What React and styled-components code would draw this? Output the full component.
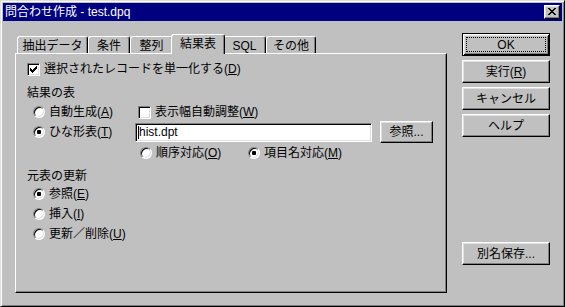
import React from "react";
import styled, { createGlobalStyle, css } from "styled-components";

const face = "#c0c0c0";
const font = `"Liberation Sans", "Noto Sans CJK JP", sans-serif`;

const tabs = [
  { label: "抽出データ", w: 71 },
  { label: "条件", w: 42 },
  { label: "整列", w: 43 },
  { label: "結果表", w: 50, on: true },
  { label: "SQL", w: 43 },
  { label: "その他", w: 50 },
];

// win95 check glyph, 7x7 pixels
const checkPixels = [
  "......#",
  ".....##",
  "#...###",
  "##.###.",
  "#####..",
  ".###...",
  "..#....",
];

const closePixels = [
  "##....##",
  ".##..##.",
  "..####..",
  "...##...",
  "..####..",
  ".##..##.",
  "##....##",
];

function PixelGlyph({ rows }) {
  const rects = [];
  rows.forEach((row, y) => {
    row.split("").forEach((c, x) => {
      if (c === "#") rects.push(<rect key={x + "-" + y} x={x} y={y} width="1" height="1" />);
    });
  });
  return (
    <svg width={rows[0].length} height={rows.length} shapeRendering="crispEdges" fill="#000">
      {rects}
    </svg>
  );
}

function App() {
  return (
    <>
      <GlobalStyle />
      <Window>
        <TitleBar>
          <TitleText>問合わせ作成 - test.dpq</TitleText>
          <CloseButton>
            <PixelGlyph rows={closePixels} />
          </CloseButton>
        </TitleBar>
        <Body>
          <LeftCol>
            <TabRow>
              {tabs.map((t) => (
                <Tab key={t.label} $w={t.w} $on={t.on}>
                  {t.label}
                </Tab>
              ))}
            </TabRow>
            <Panel>
              <Choice>
                <CheckBox>
                  <PixelGlyph rows={checkPixels} />
                </CheckBox>
                <Label>
                  選択されたレコードを単一化する(<u>D</u>)
                </Label>
              </Choice>

              <GroupTitle>結果の表</GroupTitle>
              <ResultGrid>
                <Choice $indent={6}>
                  <Radio />
                  <Label>
                    自動生成(<u>A</u>)
                  </Label>
                </Choice>
                <Choice $indent={3}>
                  <CheckBox />
                  <Label>
                    表示幅自動調整(<u>W</u>)
                  </Label>
                </Choice>
                <Choice $indent={6}>
                  <Radio $on />
                  <Label>
                    ひな形表(<u>T</u>)
                  </Label>
                </Choice>
                <FileRow>
                  <Field>
                    <Caret />
                    hist.dpt
                  </Field>
                  <Button $w={53} $h={22}>
                    参照...
                  </Button>
                </FileRow>
                <MatchRow>
                  <Choice $w={108}>
                    <Radio />
                    <Label>
                      順序対応(<u>O</u>)
                    </Label>
                  </Choice>
                  <Choice>
                    <Radio $on />
                    <Label>
                      項目名対応(<u>M</u>)
                    </Label>
                  </Choice>
                </MatchRow>
              </ResultGrid>

              <GroupTitle>元表の更新</GroupTitle>
              <UpdateList>
                <Choice $indent={6}>
                  <Radio $on />
                  <Label>
                    参照(<u>E</u>)
                  </Label>
                </Choice>
                <Choice $indent={6}>
                  <Radio />
                  <Label>
                    挿入(<u>I</u>)
                  </Label>
                </Choice>
                <Choice $indent={6}>
                  <Radio />
                  <Label>
                    更新／削除(<u>U</u>)
                  </Label>
                </Choice>
              </UpdateList>
            </Panel>
          </LeftCol>

          <ButtonCol>
            <Button $default>OK</Button>
            <Button>
              <Label>
                実行(<u>R</u>)
              </Label>
            </Button>
            <Button>キャンセル</Button>
            <Button>ヘルプ</Button>
            <Button $bottom>別名保存...</Button>
          </ButtonCol>
        </Body>
      </Window>
    </>
  );
}

export default App;

const GlobalStyle = createGlobalStyle`
  html, body {
    margin: 0;
    padding: 0;
    background: ${face};
  }
  * {
    box-sizing: border-box;
  }
  body {
    font-family: ${font};
    font-size: 12px;
    color: #000;
    text-autospace: no-autospace;
  }
  u {
    text-decoration: underline;
    text-underline-offset: 1px;
  }
`;

const raised = css`
  border: 1px solid;
  border-color: #fff #000 #000 #fff;
  box-shadow: inset -1px -1px #808080, inset 1px 1px #dfdfdf;
`;

const sunken = css`
  border: 1px solid;
  border-color: #808080 #fff #fff #808080;
  box-shadow: inset 1px 1px #000, inset -1px -1px #dfdfdf;
`;

const Window = styled.div`
  width: 565px;
  height: 307px;
  background: ${face};
  border: 1px solid;
  border-color: #dfdfdf #000 #000 #dfdfdf;
  box-shadow: inset 1px 1px #fff, inset -1px -1px #808080;
  padding: 2px;
  display: flex;
  flex-direction: column;
`;

const TitleBar = styled.div`
  height: 18px;
  background: #000080;
  color: #fff;
  display: flex;
  align-items: center;
  padding: 0 2px;
  flex-shrink: 0;
`;

const TitleText = styled.span`
  line-height: 18px;
  white-space: nowrap;
`;

const CloseButton = styled.div`
  ${raised};
  width: 16px;
  height: 14px;
  margin-left: auto;
  background: ${face};
  display: flex;
  align-items: center;
  justify-content: center;
  padding: 0 1px 1px 0;
`;

const Body = styled.div`
  flex: 1;
  display: flex;
  gap: 15px;
  padding: 12px 12px 11px 12px;
`;

const LeftCol = styled.div`
  width: 432px;
  margin-top: 1px;
  display: flex;
  flex-direction: column;
`;

const TabRow = styled.div`
  height: 19px;
  display: flex;
  align-items: flex-end;
  padding-left: 2px;
  position: relative;
  z-index: 1;
`;

const Tab = styled.div`
  width: ${({ $w }) => $w}px;
  height: 17px;
  flex-shrink: 0;
  background: ${face};
  border-top: 1px solid #fff;
  border-left: 1px solid #fff;
  border-right: 1px solid #000;
  border-radius: 3px 3px 0 0;
  box-shadow: inset -1px 0 #808080;
  display: flex;
  justify-content: center;
  padding-top: 2px;
  line-height: 14px;
  white-space: nowrap;

  ${({ $on }) =>
    $on &&
    css`
      width: ${({ $w }) => $w + 4}px;
      height: 20px;
      margin: 0 -2px -1px;
      position: relative;
      z-index: 2;
      padding-top: 2px;
    `}
`;

const Panel = styled.div`
  height: 240px;
  border: 1px solid;
  border-color: #fff #000 #000 #fff;
  box-shadow: inset -1px -1px #808080;
  padding: 7px 11px 0 11px;
  display: flex;
  flex-direction: column;
`;

const Choice = styled.div`
  height: 16px;
  display: flex;
  align-items: center;
  gap: 4px;
  padding-left: ${({ $indent }) => $indent || 0}px;
  width: ${({ $w }) => ($w ? `${$w}px` : "auto")};
  white-space: nowrap;
  line-height: 16px;
`;

const Label = styled.span`
  white-space: nowrap;
`;

const CheckBox = styled.span`
  ${sunken};
  width: 13px;
  height: 13px;
  flex-shrink: 0;
  background: #fff;
  display: flex;
  align-items: center;
  justify-content: center;
`;

const Radio = styled.span`
  width: 12px;
  height: 12px;
  flex-shrink: 0;
  border-radius: 50%;
  background: #fff;
  border: 1px solid;
  border-color: #808080 #fff #fff #808080;
  box-shadow: inset 1px 1px #000, inset -1px -1px #dfdfdf;
  display: flex;
  align-items: center;
  justify-content: center;

  &::after {
    content: "";
    width: 4px;
    height: 4px;
    border-radius: 1px;
    background: ${({ $on }) => ($on ? "#000" : "transparent")};
  }
`;

const GroupTitle = styled.div`
  height: 16px;
  line-height: 16px;
  margin-top: 8px;
`;

const ResultGrid = styled.div`
  display: grid;
  grid-template-columns: 108px auto;
  grid-template-rows: 16px 22px 16px;
  row-gap: 1px;
  margin-top: 3px;
  align-items: center;
`;

const FileRow = styled.div`
  display: flex;
  align-items: center;
  gap: 8px;
`;

const Field = styled.div`
  ${sunken};
  width: 237px;
  height: 19px;
  background: #fff;
  display: flex;
  align-items: center;
  padding-left: 2px;
  line-height: 15px;
`;

const Caret = styled.span`
  width: 1px;
  height: 13px;
  background: #000;
`;

const MatchRow = styled.div`
  grid-column: 2;
  display: flex;
  padding-left: 5px;
  margin-top: 1px;
`;

const UpdateList = styled.div`
  display: flex;
  flex-direction: column;
  gap: 4px;
  margin-top: 2px;
`;

const ButtonCol = styled.div`
  width: 88px;
  display: flex;
  flex-direction: column;
  gap: 4px;
  padding-bottom: 28px;
`;

const Button = styled.div`
  ${raised};
  width: ${({ $w }) => $w || 88}px;
  height: ${({ $h }) => $h || 23}px;
  flex-shrink: 0;
  background: ${face};
  display: flex;
  align-items: center;
  justify-content: center;
  line-height: 14px;
  white-space: nowrap;
  position: relative;
  margin-top: ${({ $bottom }) => ($bottom ? "auto" : "0")};

  ${({ $default }) =>
    $default &&
    css`
      border-color: #000;
      box-shadow: inset 1px 1px #fff, inset -1px -1px #000, inset 2px 2px #dfdfdf,
        inset -2px -2px #808080;

      &::after {
        content: "";
        position: absolute;
        inset: 3px;
        border: 1px dotted #000;
      }
    `}
`;
